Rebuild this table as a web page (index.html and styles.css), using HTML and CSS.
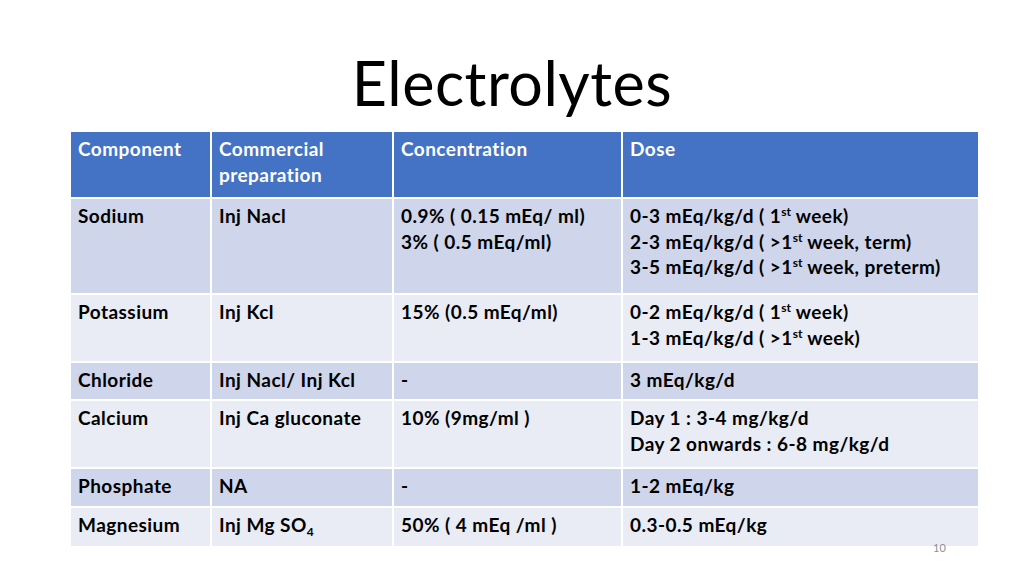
FILE: index.html
```html
<!DOCTYPE html>
<html>
<head>
<meta charset="utf-8">
<link rel="stylesheet" href="styles.css">
</head>
<body>
<div class="slide">
  <h1 class="title">Electrolytes</h1>
  <div class="table">
    <div class="row head">
      <div class="cell">Component</div>
      <div class="cell">Commercial<br>preparation</div>
      <div class="cell">Concentration</div>
      <div class="cell">Dose</div>
    </div>
    <div class="row dark">
      <div class="cell">Sodium</div>
      <div class="cell">Inj Nacl</div>
      <div class="cell">0.9% ( 0.15 mEq/ ml)<br>3% ( 0.5 mEq/ml)</div>
      <div class="cell">0-3 mEq/kg/d ( 1<sup>st</sup> week)<br>2-3 mEq/kg/d ( &gt;1<sup>st</sup> week, term)<br>3-5 mEq/kg/d ( &gt;1<sup>st</sup> week, preterm)</div>
    </div>
    <div class="row light">
      <div class="cell">Potassium</div>
      <div class="cell">Inj Kcl</div>
      <div class="cell">15% (0.5 mEq/ml)</div>
      <div class="cell">0-2 mEq/kg/d ( 1<sup>st</sup> week)<br>1-3 mEq/kg/d ( &gt;1<sup>st</sup> week)</div>
    </div>
    <div class="row dark">
      <div class="cell">Chloride</div>
      <div class="cell">Inj Nacl/ Inj Kcl</div>
      <div class="cell">-</div>
      <div class="cell">3 mEq/kg/d</div>
    </div>
    <div class="row light">
      <div class="cell">Calcium</div>
      <div class="cell">Inj Ca gluconate</div>
      <div class="cell">10% (9mg/ml )</div>
      <div class="cell">Day 1 : 3-4 mg/kg/d<br>Day 2 onwards : 6-8 mg/kg/d</div>
    </div>
    <div class="row dark">
      <div class="cell">Phosphate</div>
      <div class="cell">NA</div>
      <div class="cell">-</div>
      <div class="cell">1-2 mEq/kg</div>
    </div>
    <div class="row light">
      <div class="cell">Magnesium</div>
      <div class="cell">Inj Mg SO<sub>4</sub></div>
      <div class="cell">50% ( 4 mEq /ml )</div>
      <div class="cell">0.3-0.5 mEq/kg</div>
    </div>
  </div>
  <div class="page-num">10</div>
</div>
</body>
</html>
```

FILE: styles.css
```css
html, body {
  margin: 0;
  padding: 0;
  background: #ffffff;
}
.slide {
  width: 1024px;
  height: 576px;
  position: relative;
  overflow: hidden;
  font-family: Lato, "Open Sans", "Liberation Sans", sans-serif;
  color: #000;
}
.title {
  margin: 0;
  padding-top: 52px;
  text-align: center;
  font-weight: 400;
  font-size: 61px;
  line-height: 61px;
  letter-spacing: 0.5px;
  color: #000;
}
.table {
  margin: 19px 0 0 71px;
  width: 907px;
  display: grid;
  grid-template-columns: 139px 180px 227px 355px;
  grid-template-rows: 65px 94px 66px 36px 66px 37px 38px;
  column-gap: 2px;
  row-gap: 2px;
}
.row {
  display: contents;
}
.cell {
  padding: 4px 4px 0 7px;
  font-size: 19px;
  line-height: 25.5px;
  letter-spacing: 0.45px;
  font-weight: 700;
  box-sizing: border-box;
  white-space: nowrap;
}
.head .cell {
  background: #4472c4;
  color: #ffffff;
}
.dark .cell {
  background: #cfd5ea;
}
.light .cell {
  background: #e9ebf5;
}
sup {
  font-size: 12px;
  line-height: 0;
  vertical-align: 7px;
  letter-spacing: 0;
}
sub {
  font-size: 12px;
  line-height: 0;
  vertical-align: -4px;
}
.page-num {
  position: absolute;
  left: 933px;
  top: 541px;
  font-size: 11px;
  color: #8f8f8f;
}
```
